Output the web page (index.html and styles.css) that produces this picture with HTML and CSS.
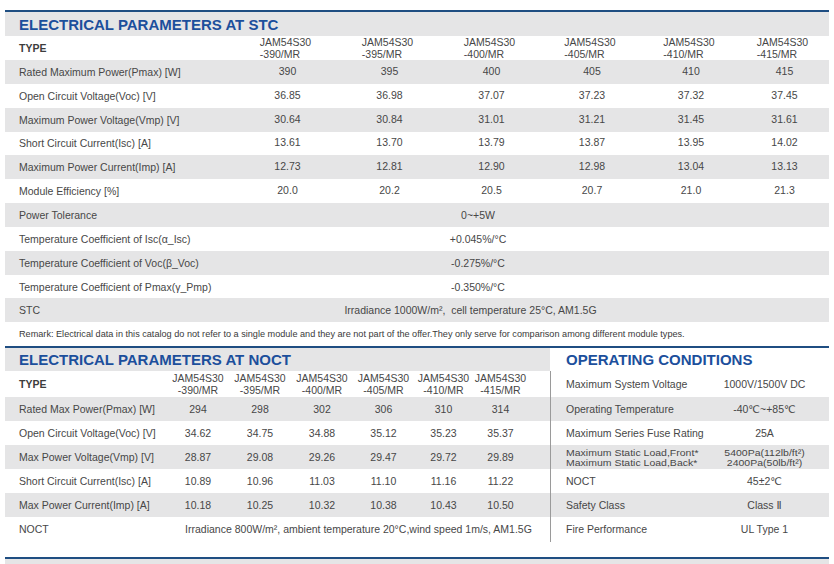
FILE: index.html
```html
<!DOCTYPE html>
<html>
<head>
<meta charset="utf-8">
<link rel="stylesheet" href="styles.css">
</head>
<body>
<div class="page">
  <section class="stc">
    <div class="band"><h2 class="title">ELECTRICAL PARAMETERS AT STC</h2></div>
    <div class="srow type-row">
      <div class="lab type">TYPE</div>
      <div class="val"><span class="model">JAM54S30<br>-390/MR</span></div>
      <div class="val"><span class="model">JAM54S30<br>-395/MR</span></div>
      <div class="val"><span class="model">JAM54S30<br>-400/MR</span></div>
      <div class="val"><span class="model">JAM54S30<br>-405/MR</span></div>
      <div class="val"><span class="model">JAM54S30<br>-410/MR</span></div>
      <div class="val"><span class="model">JAM54S30<br>-415/MR</span></div>
    </div>
    <div class="srow alt">
      <div class="lab">Rated Maximum Power(Pmax) [W]</div>
      <div class="val up">390</div><div class="val up">395</div><div class="val up">400</div><div class="val up">405</div><div class="val up">410</div><div class="val up">415</div>
    </div>
    <div class="srow">
      <div class="lab">Open Circuit Voltage(Voc) [V]</div>
      <div class="val up">36.85</div><div class="val up">36.98</div><div class="val up">37.07</div><div class="val up">37.23</div><div class="val up">37.32</div><div class="val up">37.45</div>
    </div>
    <div class="srow alt">
      <div class="lab">Maximum Power Voltage(Vmp) [V]</div>
      <div class="val up">30.64</div><div class="val up">30.84</div><div class="val up">31.01</div><div class="val up">31.21</div><div class="val up">31.45</div><div class="val up">31.61</div>
    </div>
    <div class="srow">
      <div class="lab">Short Circuit Current(Isc) [A]</div>
      <div class="val up">13.61</div><div class="val up">13.70</div><div class="val up">13.79</div><div class="val up">13.87</div><div class="val up">13.95</div><div class="val up">14.02</div>
    </div>
    <div class="srow alt">
      <div class="lab">Maximum Power Current(Imp) [A]</div>
      <div class="val up">12.73</div><div class="val up">12.81</div><div class="val up">12.90</div><div class="val up">12.98</div><div class="val up">13.04</div><div class="val up">13.13</div>
    </div>
    <div class="srow">
      <div class="lab">Module Efficiency [%]</div>
      <div class="val up">20.0</div><div class="val up">20.2</div><div class="val up">20.5</div><div class="val up">20.7</div><div class="val up">21.0</div><div class="val up">21.3</div>
    </div>
    <div class="srow alt">
      <div class="lab">Power Tolerance</div>
      <div class="span">0~+5W</div>
    </div>
    <div class="srow">
      <div class="lab">Temperature Coefficient of Isc(α_Isc)</div>
      <div class="span">+0.045%/°C</div>
    </div>
    <div class="srow alt">
      <div class="lab">Temperature Coefficient of Voc(β_Voc)</div>
      <div class="span">-0.275%/°C</div>
    </div>
    <div class="srow">
      <div class="lab">Temperature Coefficient of Pmax(γ_Pmp)</div>
      <div class="span">-0.350%/°C</div>
    </div>
    <div class="srow alt">
      <div class="lab">STC</div>
      <div class="span wide">Irradiance 1000W/m²,&nbsp; cell temperature 25°C, AM1.5G</div>
    </div>
    <p class="remark">Remark: Electrical data in this catalog do not refer to a single module and they are not part of the offer.They only serve for comparison among different module types.</p>
  </section>

  <section class="lower">
    <div class="noct">
      <div class="band"><h2 class="title">ELECTRICAL PARAMETERS AT NOCT</h2></div>
      <div class="nrow type-row">
        <div class="lab type">TYPE</div>
        <div class="val"><span class="model c">JAM54S30<br>-390/MR</span></div>
        <div class="val"><span class="model c">JAM54S30<br>-395/MR</span></div>
        <div class="val"><span class="model c">JAM54S30<br>-400/MR</span></div>
        <div class="val"><span class="model c">JAM54S30<br>-405/MR</span></div>
        <div class="val"><span class="model c">JAM54S30<br>-410/MR</span></div>
        <div class="val"><span class="model c">JAM54S30<br>-415/MR</span></div>
        <div></div>
      </div>
      <div class="nrow alt">
        <div class="lab">Rated Max Power(Pmax) [W]</div>
        <div class="val">294</div><div class="val">298</div><div class="val">302</div><div class="val">306</div><div class="val">310</div><div class="val">314</div><div></div>
      </div>
      <div class="nrow">
        <div class="lab">Open Circuit Voltage(Voc) [V]</div>
        <div class="val">34.62</div><div class="val">34.75</div><div class="val">34.88</div><div class="val">35.12</div><div class="val">35.23</div><div class="val">35.37</div><div></div>
      </div>
      <div class="nrow alt">
        <div class="lab">Max Power Voltage(Vmp) [V]</div>
        <div class="val">28.87</div><div class="val">29.08</div><div class="val">29.26</div><div class="val">29.47</div><div class="val">29.72</div><div class="val">29.89</div><div></div>
      </div>
      <div class="nrow">
        <div class="lab">Short Circuit Current(Isc) [A]</div>
        <div class="val">10.89</div><div class="val">10.96</div><div class="val">11.03</div><div class="val">11.10</div><div class="val">11.16</div><div class="val">11.22</div><div></div>
      </div>
      <div class="nrow alt">
        <div class="lab">Max Power Current(Imp) [A]</div>
        <div class="val">10.18</div><div class="val">10.25</div><div class="val">10.32</div><div class="val">10.38</div><div class="val">10.43</div><div class="val">10.50</div><div></div>
      </div>
      <div class="nrow">
        <div class="lab">NOCT</div>
        <div class="nspan">Irradiance 800W/m², ambient temperature 20°C,wind speed 1m/s, AM1.5G</div>
      </div>
    </div>
    <div class="ops">
      <div class="ops-head"><h2 class="title">OPERATING CONDITIONS</h2></div>
      <div class="ops-table">
        <div class="orow type-row">
          <div class="olab">Maximum System Voltage</div>
          <div class="oval">1000V/1500V DC</div>
        </div>
        <div class="orow alt">
          <div class="olab">Operating Temperature</div>
          <div class="oval">-40℃~+85℃</div>
        </div>
        <div class="orow">
          <div class="olab">Maximum Series Fuse Rating</div>
          <div class="oval">25A</div>
        </div>
        <div class="orow alt">
          <div class="olab"><span class="tight">Maximum Static Load,Front*<br>Maximum Static Load,Back*</span></div>
          <div class="oval"><span class="tight">5400Pa(112lb/ft²)<br>2400Pa(50lb/ft²)</span></div>
        </div>
        <div class="orow">
          <div class="olab">NOCT</div>
          <div class="oval">45±2℃</div>
        </div>
        <div class="orow alt">
          <div class="olab">Safety Class</div>
          <div class="oval">Class Ⅱ</div>
        </div>
        <div class="orow">
          <div class="olab">Fire Performance</div>
          <div class="oval">UL Type 1</div>
        </div>
      </div>
    </div>
  </section>
  <div class="footer"></div>
</div>
</body>
</html>
```
FILE: styles.css
```css
html, body {
  margin: 0;
  padding: 0;
  background: #ffffff;
}
body {
  width: 834px;
  height: 564px;
  overflow: hidden;
  font-family: "Liberation Sans", Arial, "DejaVu Sans", sans-serif;
  color: #474747;
  font-size: 10.5px;
}
.page {
  padding: 10px 5px 0 5px;
}
.stc {
  border-top: 2px solid #1f4e82;
}
.band {
  background: #e5e5e6;
  height: 24px;
  display: flex;
  align-items: center;
}
.title {
  margin: 0;
  padding-left: 14px;
  font-size: 15px;
  font-weight: bold;
  color: #1c4f9c;
  letter-spacing: 0;
  line-height: 1;
}
.srow {
  display: grid;
  grid-template-columns: 232px 101px 103px 101px 100px 98px 89px;
  height: 23.85px;
  align-items: center;
}
.srow.type-row {
  height: 24px;
}
.alt {
  background: #e5e5e6;
}
.lab {
  padding-left: 14px;
  white-space: nowrap;
}
.lab.type {
  font-weight: bold;
  color: #3d3d3d;
}
.val {
  text-align: center;
  white-space: nowrap;
}
.val.up {
  position: relative;
  top: -1px;
}
.model {
  display: inline-block;
  text-align: left;
  line-height: 12px;
  padding-right: 4px;
}
.model.c {
  text-align: center;
  padding-right: 0;
}
.span {
  grid-column: 2 / 8;
  text-align: center;
  padding-right: 110px;
  white-space: nowrap;
}
.span.wide {
  padding-right: 125px;
}
.remark {
  margin: 0;
  height: 24px;
  line-height: 24px;
  padding-left: 14px;
  font-size: 9.15px;
  color: #3a3a3a;
  white-space: nowrap;
}
.lower {
  display: flex;
  border-top: 2px solid #1f4e82;
}
.noct {
  width: 545px;
}
.noct .band {
  height: 23px;
}
.nrow {
  display: grid;
  grid-template-columns: 162px 62px 62px 62px 61px 59px 55px 22px;
  height: 24px;
  align-items: center;
}
.nrow.type-row {
  height: 26px;
}
.nspan {
  grid-column: 2 / 9;
  text-align: center;
  white-space: nowrap;
}
.ops {
  width: 279px;
}
.ops-head {
  height: 23px;
  display: flex;
  align-items: center;
  padding-left: 2px;
}
.ops-table {
  border-left: 1px solid #9a9a9a;
  padding-bottom: 1px;
}
.orow {
  display: grid;
  grid-template-columns: 149px 129px;
  height: 24px;
  align-items: center;
}
.orow.type-row {
  height: 26px;
}
.olab {
  padding-left: 15px;
  white-space: nowrap;
}
.oval {
  text-align: center;
  white-space: nowrap;
}
.tight {
  display: inline-block;
  font-size: 10.5px;
  line-height: 10.5px;
  transform: scaleY(0.85);
}
.footer {
  margin-top: 15px;
  border-top: 2px solid #1f4e82;
  background: #e5e5e6;
  height: 10px;
}
```
